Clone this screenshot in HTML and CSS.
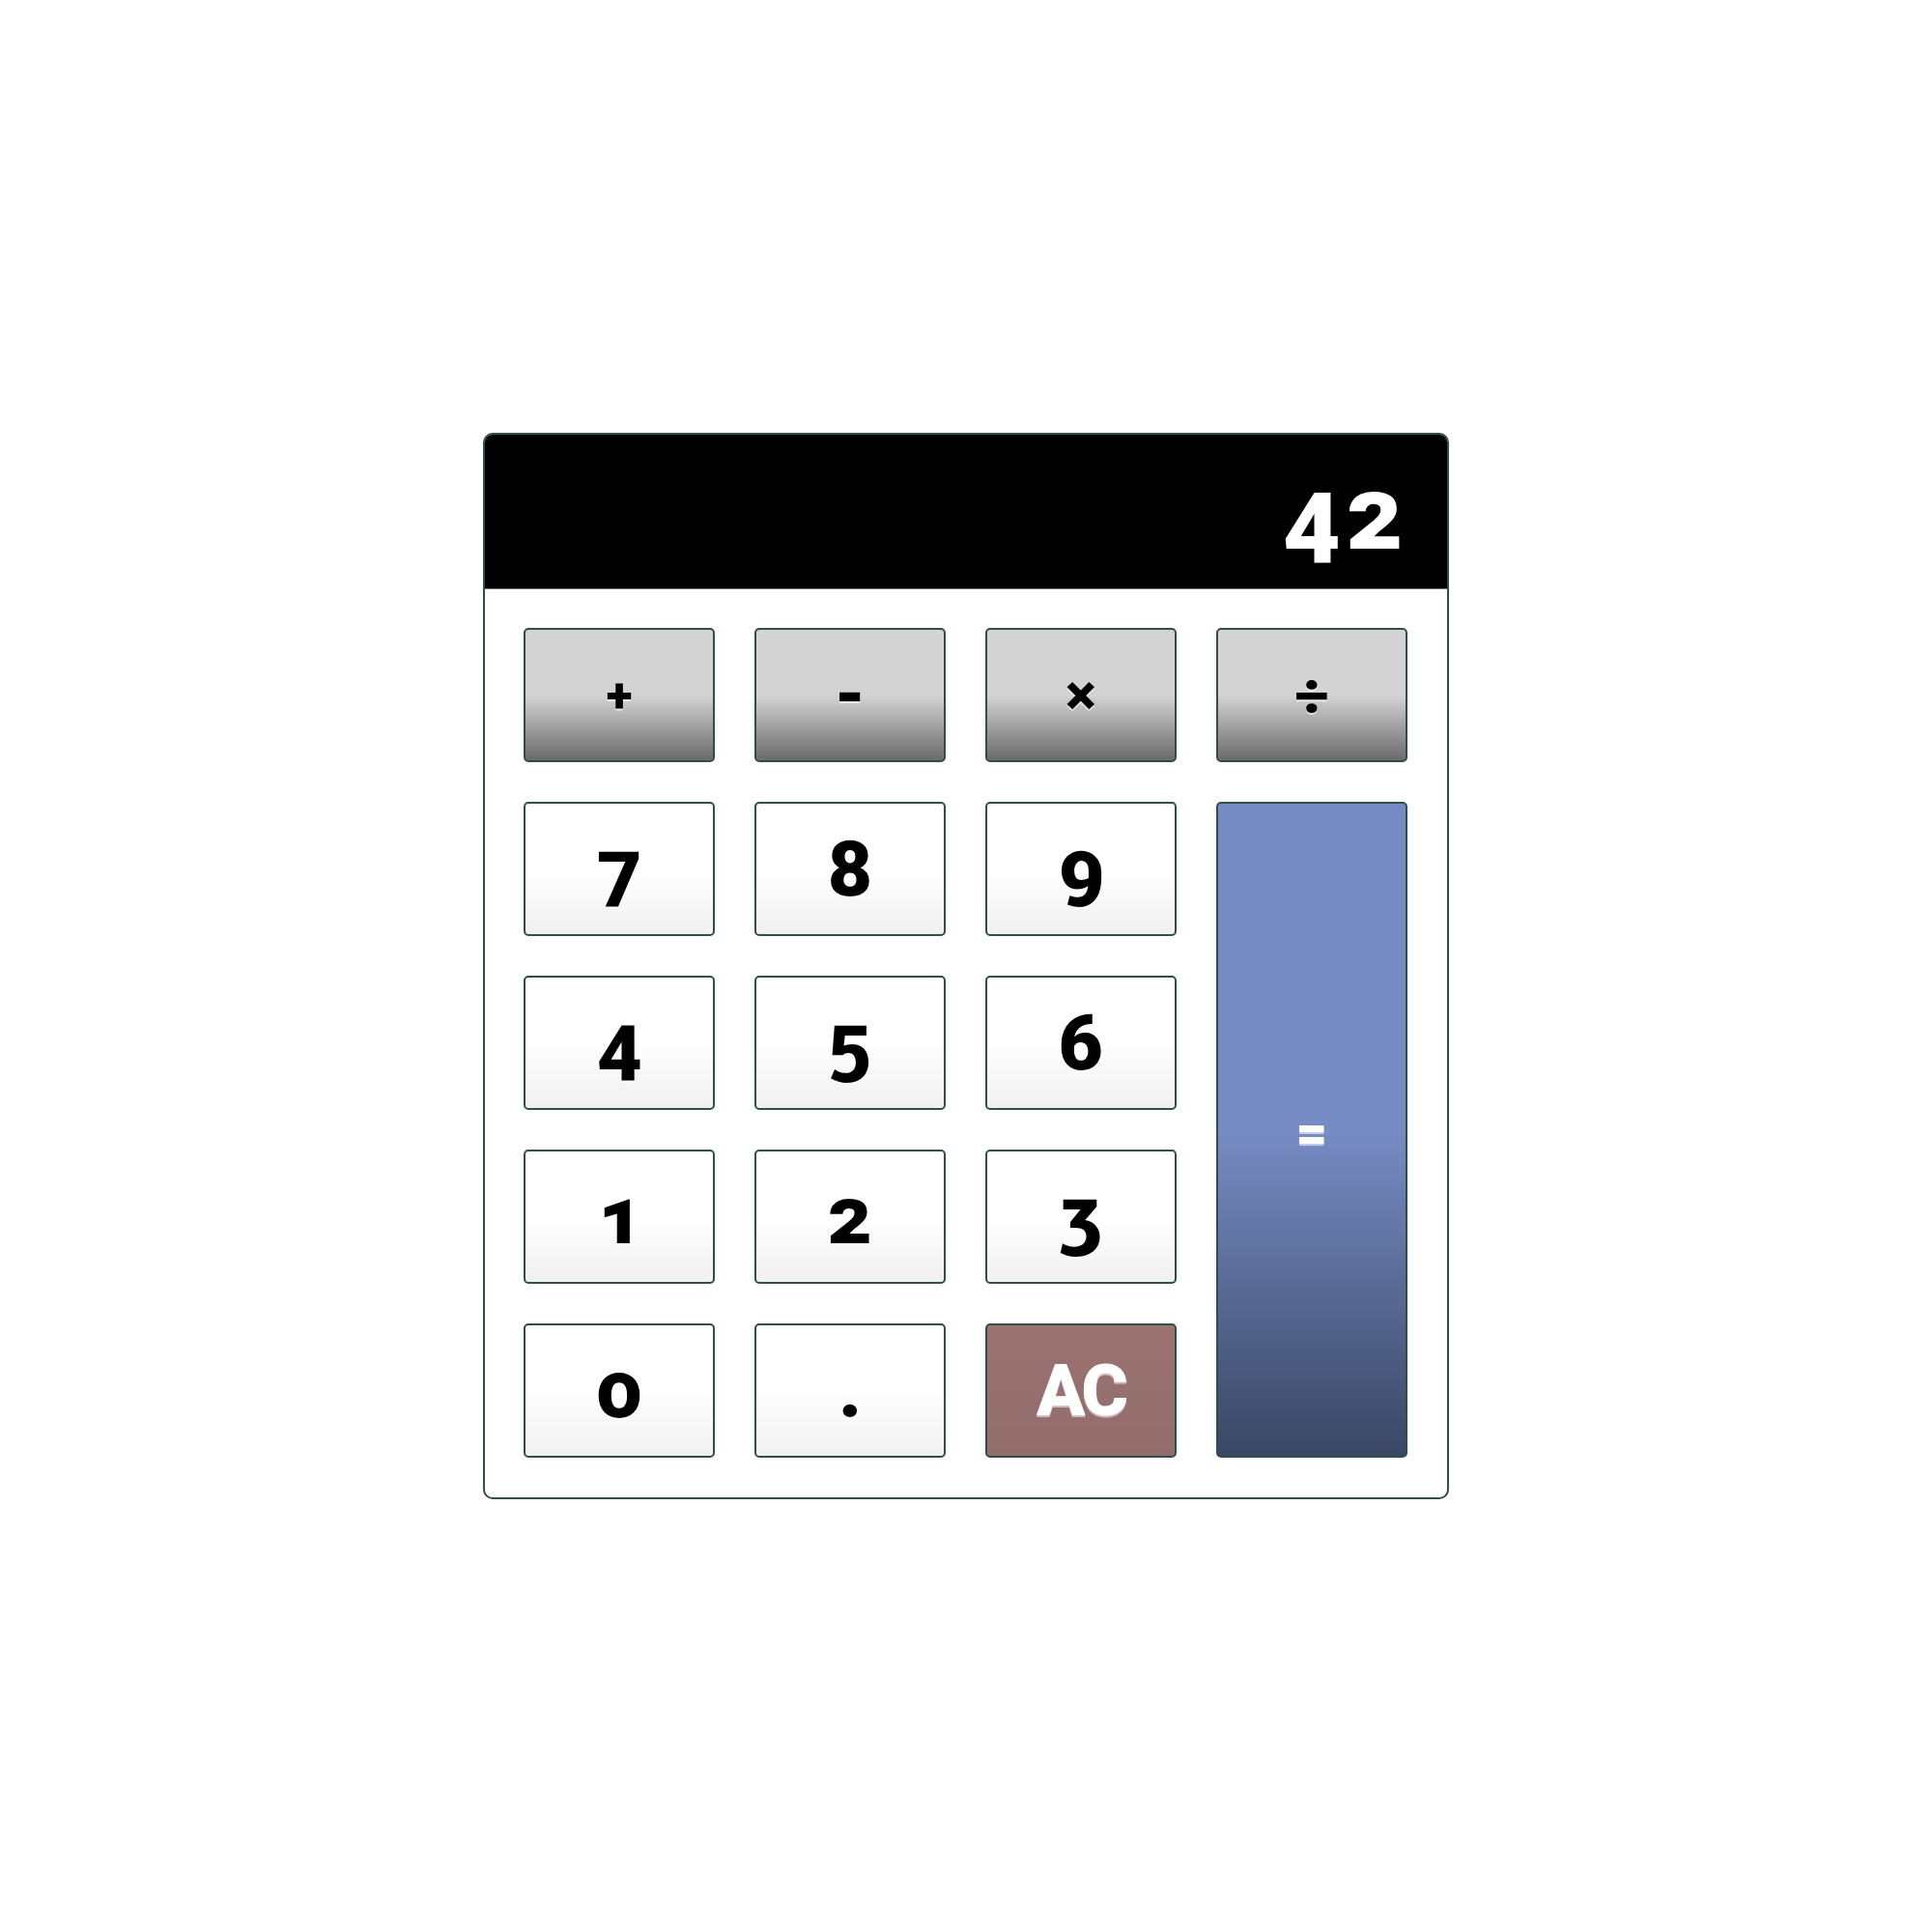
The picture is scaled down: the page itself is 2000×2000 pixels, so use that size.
FILE: index.html
```html
<!DOCTYPE html>
<html>
<head>
<meta charset="utf-8">
<link rel="stylesheet" href="styles.css">
</head>
<body>
<div class="calc">
  <div class="display">42</div>
  <div class="keys">
    <div class="key op plus">+</div>
    <div class="key op minus">-</div>
    <div class="key op times">×</div>
    <div class="key op divide">÷</div>
    <div class="key num">7</div>
    <div class="key num">8</div>
    <div class="key num">9</div>
    <div class="key eq">=</div>
    <div class="key num">4</div>
    <div class="key num">5</div>
    <div class="key num">6</div>
    <div class="key num">1</div>
    <div class="key num">2</div>
    <div class="key num">3</div>
    <div class="key num">0</div>
    <div class="key num">.</div>
    <div class="key ac">AC</div>
  </div>
</div>
</body>
</html>
```
FILE: styles.css
```css
html, body {
  margin: 0;
  padding: 0;
  background: #ffffff;
}
body {
  min-height: 100vh;
  display: flex;
  align-items: center;
  justify-content: center;
  font-family: "Roboto", "Noto Sans", sans-serif;
  font-weight: 900;
  font-feature-settings: "onum";
}
.calc {
  width: 1000px;
  box-sizing: border-box;
  border: 2px solid #2f4f4f;
  border-radius: 10px;
  overflow: hidden;
  background: #fff;
}
.display {
  height: 160px;
  box-sizing: border-box;
  background: #000;
  border-bottom: 1px solid #6a6a6a;
  color: #fff;
  font-size: 102px;
  letter-spacing: 7px;
  display: flex;
  align-items: center;
  justify-content: flex-end;
  padding: 6px 38px 0;
}
.keys {
  display: grid;
  grid-template-columns: repeat(4, 1fr);
  grid-auto-rows: 139px;
  gap: 41px;
  padding: 40px 41px 41px 40px;
}
.key {
  box-sizing: border-box;
  border: 2px solid #2f4f4f;
  border-radius: 5px;
  display: flex;
  align-items: center;
  justify-content: center;
  font-size: 80px;
  color: #000;
  text-shadow: 0 2px 1px rgba(255, 255, 255, 0.6);
}
.op {
  background: linear-gradient(to bottom, #d3d3d3 50%, #6b6b6b 100%);
}
.plus { font-size: 50px; }
.minus { font-size: 72px; }
.times { font-size: 60px; }
.divide { font-size: 62px; }
.num {
  background: linear-gradient(to bottom, #ffffff 50%, #f0f0f0 100%);
}
.eq {
  grid-column: 4;
  grid-row: 2 / span 4;
  background: linear-gradient(to bottom, #778cc4 50%, #3a4664 100%);
  color: #fff;
  font-size: 56px;
  padding-top: 6px;
}
.ac {
  background: linear-gradient(to bottom, #9b7472, #926d6b);
  color: #fff;
  font-size: 74px;
  letter-spacing: -3px;
}
```
